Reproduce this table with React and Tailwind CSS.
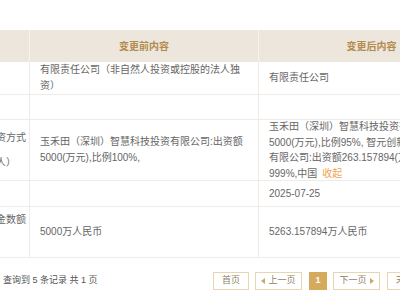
import React from 'react';

const rows = [
  {
    h: 'h-[33px]',
    label: ['企业类型'],
    before: ['有限责任公司（非自然人投资或控股的法人独资）'],
    after: ['有限责任公司'],
  },
  { h: 'h-[25px]', label: ['经营期限'], before: [], after: [] },
  {
    h: 'h-[61px]',
    label: ['投资人出资方式', '（含投资人）'],
    before: ['玉禾田（深圳）智慧科技投资有限公司:出资额5000(万元),比例100%,'],
    after: [
      '玉禾田（深圳）智慧科技投资有限公司:出资额',
      '5000(万元),比例95%, 智元创新（深圳）科技投资',
      '有限公司:出资额263.157894(万元),比例5.263157894736',
      '999%,中国',
    ],
    fold: true,
  },
  { h: 'h-[26px]', label: ['变更日期'], before: [], after: ['2025-07-25'] },
  {
    h: 'h-[51px]',
    label: ['注册资本金数额', '（万元）'],
    before: ['5000万人民币'],
    after: ['5263.157894万人民币'],
  },
];

const Tri = ({ dir }) => (
  <svg width="4" height="6" viewBox="0 0 4 6" className="shrink-0">
    {dir === 'left' ? <path d="M4 0 L0 3 L4 6 Z" fill="#c9a86a" /> : <path d="M0 0 L4 3 L0 6 Z" fill="#c9a86a" />}
  </svg>
);

export default function App() {
  return (
    <div className="w-[400px] h-[300px] overflow-hidden bg-white font-['Liberation_Sans','Noto_Sans_CJK_SC',sans-serif] text-[10px]">
      <div className="h-[30px]" />
      <div className="-ml-[71px] w-[555px]">
        {/* header */}
        <div className="flex h-[32px] bg-[#ede6dc] text-[#b38b4d] font-bold">
          <div className="w-[100px] flex items-center justify-center">变更事项</div>
          <div className="w-[229px] border-l border-[#f6f2ec] flex items-center justify-center">变更前内容</div>
          <div className="w-[226px] border-l border-[#f6f2ec] flex items-center justify-center">变更后内容</div>
        </div>
        {rows.map((r, i) => (
          <div key={i} className={`flex border-b border-[#efece8] text-[#666] ${r.h}`}>
            <div className="w-[100px] pl-[27px] flex flex-col justify-center leading-[25px] whitespace-nowrap">
              {r.label.map((l, j) => (
                <div key={j}>{l}</div>
              ))}
            </div>
            <div className="w-[229px] border-l border-[#efece8] px-[10px] flex flex-col justify-center leading-[16px]">
              {r.before.map((t, j) => (
                <div key={j}>{t}</div>
              ))}
            </div>
            <div className="w-[226px] border-l border-[#efece8] px-[10px] flex flex-col justify-center leading-[15.5px] whitespace-nowrap">
              {r.after.map((t, j) => (
                <div key={j}>
                  {t}
                  {r.fold && j === r.after.length - 1 && <span className="ml-[5px] text-[#f0a24e]">收起</span>}
                </div>
              ))}
            </div>
          </div>
        ))}
      </div>
      {/* pagination */}
      <div className="flex items-center pt-[14px] pl-[3px] whitespace-nowrap">
        <div className="w-[210px] shrink-0 text-[9px] text-[#555]">查询到 5 条记录 共 1 页</div>
        <div className="flex shrink-0 items-center text-[9px] text-[#8f806a]">
          <div className="h-[18px] w-[36px] shrink-0 border border-[#e9d6b0] flex items-center justify-center">首页</div>
          <div className="ml-[6px] h-[18px] w-[47px] shrink-0 border border-[#e9d6b0] flex items-center justify-center gap-[3px]">
            <Tri dir="left" />
            <span>上一页</span>
          </div>
          <div className="ml-[7px] h-[18px] w-[18px] shrink-0 bg-[#d5aa5c] text-white font-bold flex items-center justify-center">1</div>
          <div className="ml-[6px] h-[18px] w-[47px] shrink-0 border border-[#e9d6b0] flex items-center justify-center gap-[3px]">
            <span>下一页</span>
            <Tri dir="right" />
          </div>
          <div className="ml-[7px] h-[18px] w-[36px] shrink-0 border border-[#e9d6b0] flex items-center justify-center">末页</div>
        </div>
      </div>
    </div>
  );
}
